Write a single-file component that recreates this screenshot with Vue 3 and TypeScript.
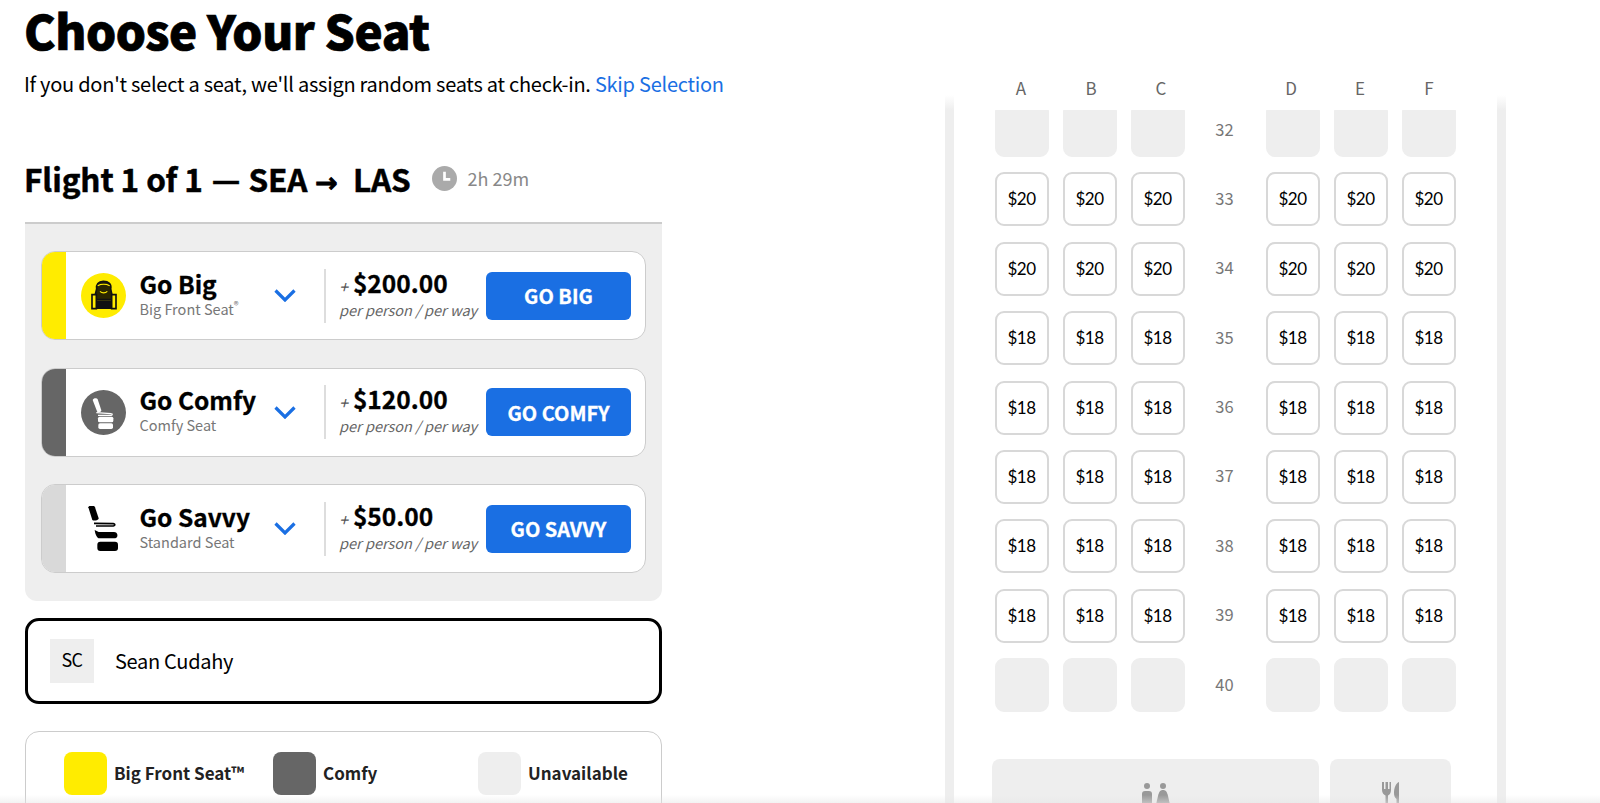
<script setup lang="ts">
interface Tier {
  id: string;
  title: string;
  sub: string;
  sup?: string;
  price: string;
  cta: string;
  band: string;
}

const tiers: Tier[] = [
  { id: 'big', title: 'Go Big', sub: 'Big Front Seat', sup: '®', price: '$200.00', cta: 'GO BIG', band: '#ffec00' },
  { id: 'comfy', title: 'Go Comfy', sub: 'Comfy Seat', price: '$120.00', cta: 'GO COMFY', band: '#666666' },
  { id: 'savvy', title: 'Go Savvy', sub: 'Standard Seat', price: '$50.00', cta: 'GO SAVVY', band: '#d9d9d9' }
];

const legend = [
  { label: 'Big Front Seat™', color: '#ffec00' },
  { label: 'Comfy', color: '#666666' },
  { label: 'Unavailable', color: '#eeeeee' }
];

const rows = [
  { no: 32, price: '' },
  { no: 33, price: '$20' },
  { no: 34, price: '$20' },
  { no: 35, price: '$18' },
  { no: 36, price: '$18' },
  { no: 37, price: '$18' },
  { no: 38, price: '$18' },
  { no: 39, price: '$18' },
  { no: 40, price: '' }
];
</script>

<template>
  <div class="page">
    <section class="left">
      <h1>Choose Your Seat</h1>
      <p class="intro">If you don't select a seat, we'll assign random seats at check-in. <a>Skip Selection</a></p>

      <div class="flight">
        <h2>Flight 1 of 1 <span class="dash">—</span> SEA <span class="arrow">→</span> LAS</h2>
        <svg class="clock" viewBox="0 0 26 26" width="25" height="25">
          <circle cx="13" cy="13" r="13" fill="#aaaaaa" />
          <path d="M13 6v8h6" fill="none" stroke="#fff" stroke-width="2.800" />
        </svg>
        <span class="duration">2h 29m</span>
      </div>

      <div class="tiers">
        <div v-for="tier in tiers" :key="tier.id" class="tier">
          <div class="band" :style="{ background: tier.band }"></div>
          <div class="icon">
            <svg v-if="tier.id === 'big'" viewBox="33 42 135 135" width="45" height="45">
              <circle cx="100.500" cy="109.500" r="67.500" fill="#ffec00" />
              <path d="M80 90c-2-14 5-22 20-23 16 0 25 8 22 23l7 32H72z" fill="#2a2600" stroke="#111" stroke-width="5" />
              <path d="M83 80c10-5 26-5 36 0M90 97c6 6 16 6 22 0" fill="none" stroke="#ffec00" stroke-width="3.500" />
              <path d="M66 107h13v42H66zM125 107h13v42h-13z" fill="#ffec00" stroke="#111" stroke-width="5" />
              <rect x="79" y="124" width="46" height="26" fill="#111" />
            </svg>
            <svg v-else-if="tier.id === 'comfy'" viewBox="33 30 135 135" width="45" height="45">
              <circle cx="100.500" cy="97.500" r="67.500" fill="#666666" />
              <path d="M68 60c2-6 12-7 15-2l11 33c1 5-8 7-12 5z" fill="#fff" />
              <path d="M79 98l44 3c5 0 5 4 0 5H84" fill="none" stroke="#fff" stroke-width="3.500" />
              <rect x="84" y="110" width="46" height="17" rx="5" fill="#fff" />
              <rect x="85" y="130" width="44" height="17" rx="5" fill="#fff" />
            </svg>
            <svg v-else viewBox="33 36 135 135" width="45" height="45">
              <path d="M55 40c3-8 17-8 20 0l11 33c1 6-15 9-19 5z" fill="#000" />
              <path d="M72 88l58 1c6 1 6 6 0 7H78" fill="none" stroke="#000" stroke-width="5" />
              <path d="M74 108l12 6h46c12 0 14 16 4 19H88c-6 0-12-10-14-25z" fill="#000" />
              <rect x="82" y="143" width="62" height="28" rx="9" fill="#000" />
            </svg>
          </div>
          <div class="names">
            <div class="title">{{ tier.title }}</div>
            <div class="sub">{{ tier.sub }}<sup v-if="tier.sup">{{ tier.sup }}</sup></div>
          </div>
          <svg class="chevron" viewBox="0 0 22 13" width="22" height="13">
            <path d="M1.500 1.500l9.500 9.500 9.500-9.500" fill="none" stroke="#1a6fe3" stroke-width="3.200" />
          </svg>
          <div class="pricing">
            <div class="price"><i>+</i>{{ tier.price }}</div>
            <div class="per">per person / per way</div>
          </div>
          <button class="cta">{{ tier.cta }}</button>
        </div>
      </div>

      <div class="passenger">
        <span class="initials">SC</span>
        <span class="name">Sean Cudahy</span>
      </div>

      <div class="legend">
        <div v-for="item in legend" :key="item.label" class="legend-item">
          <span class="swatch" :style="{ background: item.color }"></span>
          <span>{{ item.label }}</span>
        </div>
      </div>
    </section>

    <section class="map">
      <div class="cols">
        <div class="group"><span>A</span><span>B</span><span>C</span></div>
        <div class="aisle"></div>
        <div class="group"><span>D</span><span>E</span><span>F</span></div>
      </div>
      <div class="cabin">
        <div class="rows">
          <div v-for="row in rows" :key="row.no" class="row">
            <div class="group">
              <div v-for="n in 3" :key="n" class="seat" :class="{ off: !row.price }">{{ row.price }}</div>
            </div>
            <div class="aisle">{{ row.no }}</div>
            <div class="group">
              <div v-for="n in 3" :key="n" class="seat" :class="{ off: !row.price }">{{ row.price }}</div>
            </div>
          </div>
        </div>
        <div class="amenities">
          <div class="amenity lav">
            <svg viewBox="0 0 32 30" width="32" height="30">
              <circle cx="7" cy="4" r="3" fill="#999" />
              <rect x="2" y="9" width="10" height="18" rx="3" fill="#999" />
              <circle cx="23" cy="4" r="3" fill="#999" />
              <path d="M23 8c3 0 4 2 5 6l3 13H15l3-13c1-4 2-6 5-6z" fill="#999" />
            </svg>
          </div>
          <div class="amenity galley">
            <svg viewBox="0 0 20 30" width="20" height="30">
              <path d="M1 0v8c0 3 2 5 3.500 5.500V30h2.500V13.500C8.500 13 10 11 10 8V0H8.500v7H7V0H4.500v7H3V0z" fill="#999" />
              <path d="M18 0c-3 1-5 6-5 11 0 3 1 5 2.500 6V30H18z" fill="#999" />
            </svg>
          </div>
        </div>
      </div>
    </section>
    <div class="page-fade"></div>
  </div>
</template>

<style>
html,
body {
  margin: 0;
  background: #fff;
}
</style>

<style scoped>
.page {
  position: relative;
  display: flex;
  width: 1600px;
  height: 803px;
  overflow: hidden;
  font-family: 'Noto Sans CJK JP', 'Noto Sans', sans-serif;
  color: #000;
}

.left {
  width: 637px;
  margin-left: 25px;
  flex: none;
}

h1 {
  margin: 0 0 0 -1px;
  padding-top: 3px;
  font-size: 47.500px;
  line-height: 54px;
  font-weight: 900;
  letter-spacing: -0.5px;
  -webkit-text-stroke: 0.7px #000;
}

.intro {
  margin: 13px 0 0 -1px;
  font-size: 20px;
  line-height: 28px;
  letter-spacing: -0.25px;
  white-space: nowrap;
}

.intro a {
  color: #1a6fe3;
}

.flight {
  display: flex;
  align-items: center;
  height: 40px;
  margin: 60px 0 0 -1px;
}

h2 {
  margin: 0;
  font-size: 31.500px;
  line-height: 40px;
  font-weight: 700;
  letter-spacing: -0.1px;
  white-space: nowrap;
  -webkit-text-stroke: 0.5px #000;
}

.dash {
  margin: 0 1px 0 2px;
}

.arrow {
  margin: 0 8px 0 1px;
  font-family: 'DejaVu Sans', sans-serif;
  font-size: 27px;
  line-height: 30px;
  -webkit-text-stroke: 0.8px #000;
}

.clock {
  margin-left: 21px;
}

.duration {
  margin-left: 11px;
  font-size: 18px;
  color: #888;
}

.tiers {
  margin-top: 24px;
  height: 379px;
  box-sizing: border-box;
  padding: 27px 16px 0;
  background: #eee;
  border-top: 2px solid #ccc;
  border-radius: 0 0 12px 12px;
}

.tier {
  display: flex;
  align-items: center;
  height: 89px;
  margin-bottom: 27.600px;
  box-sizing: border-box;
  background: #fff;
  border: 1px solid #ccc;
  border-radius: 14px;
  overflow: hidden;
}

.band {
  align-self: stretch;
  width: 24px;
  flex: none;
}

.icon {
  width: 45px;
  height: 45px;
  margin-left: 15px;
  flex: none;
}

.names {
  width: 134.500px;
  margin-left: 13.500px;
  padding-bottom: 4px;
  flex: none;
}

.title {
  font-size: 24.500px;
  line-height: 30px;
  font-weight: 700;
  -webkit-text-stroke: 0.3px #000;
}

.sub {
  font-size: 14.500px;
  line-height: 20px;
  color: #777;
}

.sub sup {
  font-size: 10px;
  line-height: 0;
}

.chevron {
  flex: none;
}

.pricing {
  align-self: center;
  width: 162px;
  height: 54px;
  margin-left: 28px;
  padding-left: 13px;
  box-sizing: border-box;
  border-left: 2px solid #ddd;
  flex: none;
}

.price {
  font-size: 24.500px;
  line-height: 27px;
  font-weight: 700;
  -webkit-text-stroke: 0.3px #000;
}

.price i {
  margin-right: 5px;
  font-size: 16px;
  font-weight: 400;
  color: #555;
  -webkit-text-stroke: 0;
}

.per {
  font-size: 14.500px;
  line-height: 20px;
  font-style: italic;
  white-space: nowrap;
  color: #666;
}

.cta {
  width: 145px;
  height: 48px;
  padding: 0;
  border: 0;
  border-radius: 6px;
  background: #1a6fe3;
  color: #fff;
  font: 700 20px 'Noto Sans CJK JP', 'Noto Sans', sans-serif;
  -webkit-text-stroke: 0.3px #fff;
  flex: none;
}

.passenger {
  display: flex;
  align-items: center;
  height: 86px;
  margin-top: 17px;
  padding-left: 22px;
  box-sizing: border-box;
  border: 3px solid #000;
  border-radius: 14px;
}

.initials {
  width: 44px;
  height: 44px;
  display: flex;
  align-items: center;
  justify-content: center;
  padding-bottom: 4px;
  box-sizing: border-box;
  background: #eee;
  font-size: 18px;
  letter-spacing: -0.5px;
}

.name {
  margin-left: 21px;
  padding-bottom: 2px;
  font-size: 20px;
  letter-spacing: -0.3px;
}

.legend {
  display: grid;
  grid-template-columns: 209px 205px 1fr;
  height: 120px;
  margin-top: 27px;
  padding: 20px 0 0 38px;
  box-sizing: border-box;
  border: 1px solid #ccc;
  border-radius: 14px;
}

.legend-item {
  display: flex;
  align-items: flex-start;
  gap: 7px;
  font-size: 17px;
  line-height: 41px;
  font-weight: 700;
  color: #222;
}

.swatch {
  width: 43px;
  height: 43px;
  border-radius: 8px;
  flex: none;
}

.map {
  width: 561px;
  margin-left: 283px;
  flex: none;
}

.cols {
  position: relative;
  display: flex;
  height: 110px;
  padding: 75px 0 0 49px;
  box-sizing: border-box;
  font-size: 17px;
  line-height: 26px;
  color: #666;
}

.cols::before,
.cols::after {
  content: '';
  position: absolute;
  bottom: 0;
  width: 9px;
  height: 15px;
  background: linear-gradient(#fff, #eee);
}

.cols::before {
  left: 0;
}

.cols::after {
  right: 0;
}

.group {
  display: flex;
  gap: 14px;
}

.cols .group {
  gap: 15px;
}

.cols .group:first-child {
  gap: 16px;
}

.cols .group span {
  width: 54px;
  text-align: center;
}

.aisle {
  width: 81px;
  flex: none;
}

.cols .aisle {
  width: 76px;
}

.cabin {
  height: 693px;
  overflow: hidden;
  border-left: 9px solid #eee;
  border-right: 9px solid #eee;
}

.rows {
  margin-top: -7px;
  padding-left: 41px;
}

.row {
  display: flex;
  align-items: center;
  height: 54px;
  margin-bottom: 15.400px;
}

.row .aisle {
  padding: 0 2px 3px 0;
  box-sizing: border-box;
  text-align: center;
  font-size: 16.500px;
  color: #777;
}

.seat {
  width: 54px;
  height: 54px;
  padding: 0 1px 1px 0;
  display: flex;
  align-items: center;
  justify-content: center;
  box-sizing: border-box;
  border: 2px solid #d8d8d8;
  border-radius: 9px;
  font-family: 'Lato', sans-serif;
  font-size: 17px;
  letter-spacing: -0.6px;
  color: #000;
}

.seat.off {
  border-color: #eee;
  background: #eee;
}

.amenities {
  display: flex;
  gap: 11px;
  margin: 47px 0 0 38px;
}

.amenity {
  display: flex;
  justify-content: center;
  height: 100px;
  padding-top: 23px;
  box-sizing: border-box;
  background: #eee;
  border-radius: 8px;
}

.lav {
  width: 327px;
}

.galley {
  width: 121px;
}

.page-fade {
  position: absolute;
  left: 0;
  right: 0;
  bottom: 0;
  height: 8px;
  background: linear-gradient(rgba(230, 230, 230, 0), rgba(230, 230, 230, 0.5));
}
</style>
